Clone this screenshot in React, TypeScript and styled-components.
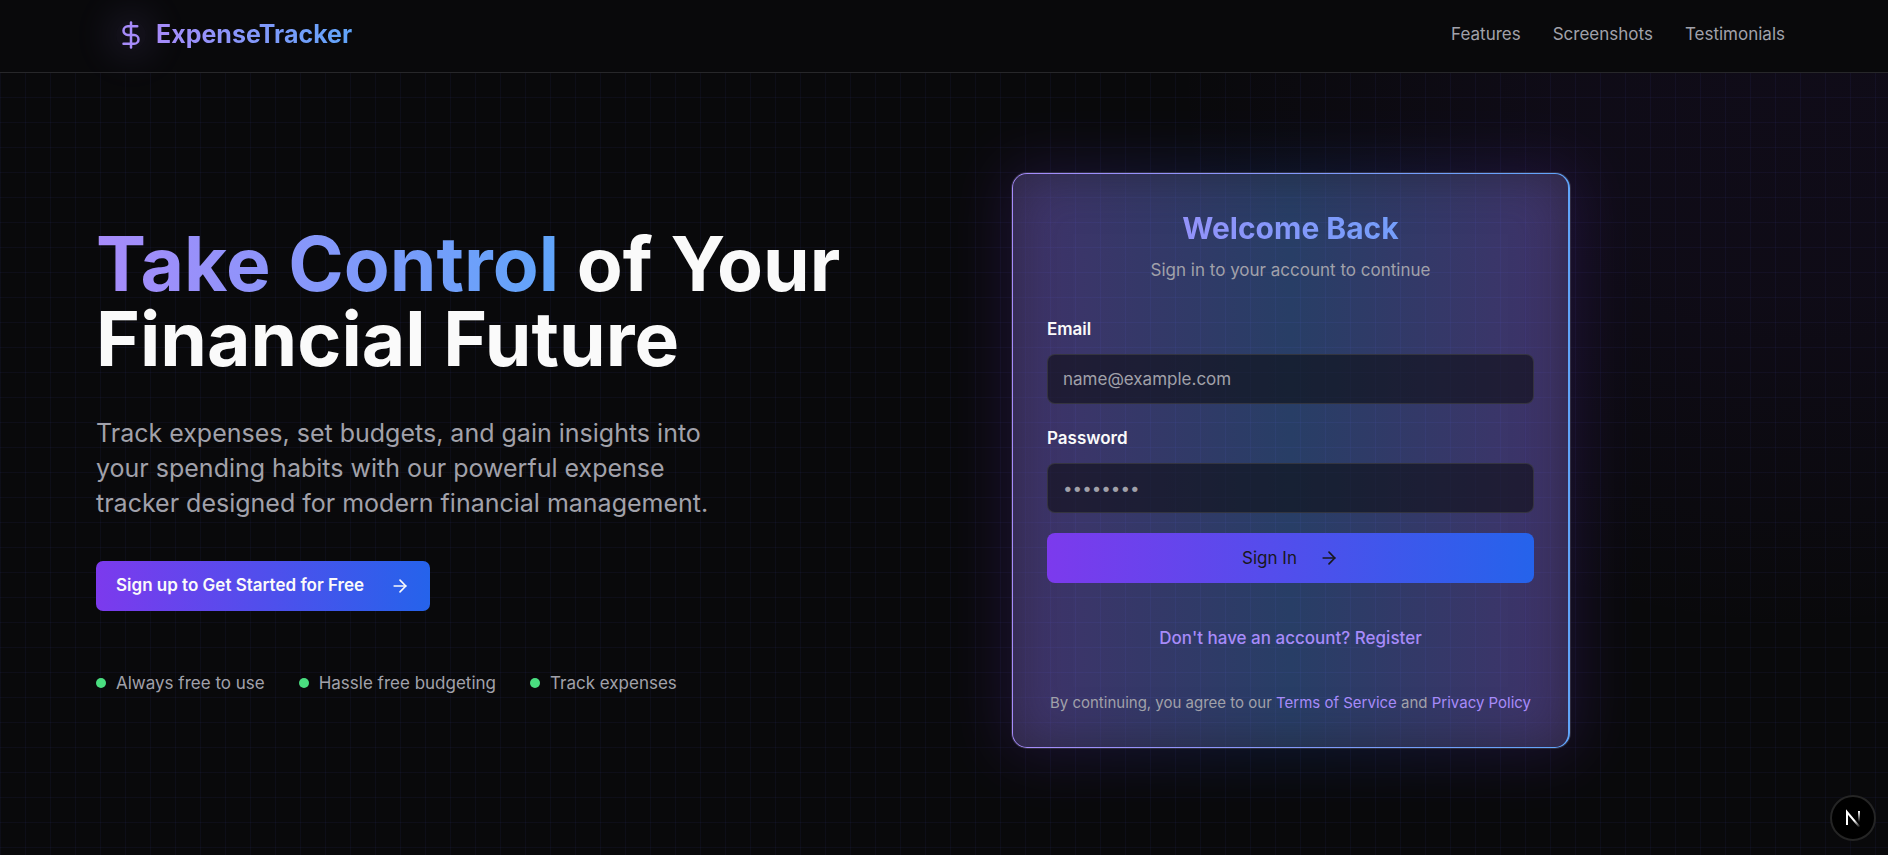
import React from "react";
import styled, { createGlobalStyle, css } from "styled-components";
import { ArrowRight, DollarSign } from "lucide-react";

const Global = createGlobalStyle`
  * { box-sizing: border-box; }
  html { background: #09090b; }
  body {
    margin: 0;
    background: #09090b;
    color: #fafafa;
    font-family: Inter, "Liberation Sans", sans-serif;
    font-size: 17px;
    line-height: 25px;
  }
  a { text-decoration: none; color: inherit; }
  h1, h2, p, ul { margin: 0; padding: 0; }
  input, button { font: inherit; }
`;

const brandText = css`
  background: linear-gradient(to right, #a78bfa, #60a5fa);
  background-clip: text;
  -webkit-background-clip: text;
  color: transparent;
`;

const brandFill = css`
  background: linear-gradient(to right, #7c3aed, #2563eb);
`;

const Page = styled.div`
  display: flex;
  flex-direction: column;
  min-height: 100vh;
`;

const Header = styled.header`
  display: flex;
  align-items: center;
  justify-content: space-between;
  height: 73px;
  padding: 0 103px 3px 119px;
  border-bottom: 1px solid #27272a;
`;

const Brand = styled.a`
  display: flex;
  align-items: center;
  gap: 10px;
`;

const BrandMark = styled.span`
  display: flex;
  margin-left: -3px;
  color: #a78bfa;
  border-radius: 50%;
  box-shadow: 0 0 38px 8px rgba(167, 139, 250, 0.12);
  background: rgba(167, 139, 250, 0.06);
`;

const BrandName = styled.span`
  ${brandText}
  font-size: 25px;
  line-height: 35px;
  font-weight: 700;
`;

const Nav = styled.nav`
  display: flex;
  gap: 32px;
  color: #a1a1aa;
`;

const Hero = styled.main`
  flex: 1;
  display: grid;
  grid-template-columns: 1fr 1fr;
  gap: 60px;
  align-items: center;
  padding: 65px 20px 72px 96px;
  background:
    linear-gradient(to right, rgba(99, 102, 241, 0.06) 1px, transparent 1px) 0 -1px / 25px 25px,
    linear-gradient(to bottom, rgba(99, 102, 241, 0.06) 1px, transparent 1px) 0 -1px / 25px 25px,
    radial-gradient(ellipse 620px 560px at 95% 0, rgba(124, 58, 237, 0.06), rgba(124, 58, 237, 0.05) 40%, transparent);
`;

const Pitch = styled.section`
  display: flex;
  flex-direction: column;
  align-items: flex-start;
`;

const Headline = styled.h1`
  font-size: 75px;
  line-height: 75px;
  font-weight: 700;
`;

const Accent = styled.span`
  ${brandText}
`;

const Lead = styled.p`
  max-width: 640px;
  margin-top: 40px;
  color: #a1a1aa;
  font-size: 25px;
  line-height: 35px;
`;

const CallToAction = styled.a`
  ${brandFill}
  display: flex;
  align-items: center;
  gap: 26px;
  height: 50px;
  margin-top: 40px;
  padding: 0 20px;
  border-radius: 7px;
  font-weight: 600;
`;

const Perks = styled.ul`
  display: flex;
  gap: 34px;
  margin-top: 60px;
  list-style: none;
  color: #a1a1aa;
`;

const Perk = styled.li`
  display: flex;
  align-items: center;
  gap: 10px;
  &::before {
    content: "";
    width: 10px;
    height: 10px;
    border-radius: 50%;
    background: #4ade80;
  }
`;

const CardGlow = styled.div`
  position: relative;
  z-index: 0;
  width: 100%;
  max-width: 558px;
  &::before {
    content: "";
    position: absolute;
    inset: -8px;
    z-index: -1;
    border-radius: 24px;
    background: linear-gradient(to right, #7c3aed, #2563eb 50%, #7c3aed);
    opacity: 0.17;
    filter: blur(30px);
  }
`;

const Card = styled.section`
  padding: 34px;
  border-radius: 15px;
  background:
    linear-gradient(to right, rgba(99, 102, 241, 0.07) 1px, transparent 1px) 0 0 / 25px 25px fixed padding-box,
    linear-gradient(to bottom, rgba(99, 102, 241, 0.07) 1px, transparent 1px) 0 22px / 25px 25px fixed padding-box,
    linear-gradient(to right, #40336a, #283e66 50%, #40336a) padding-box,
    linear-gradient(to right, #a78bfa, #60a5fa) border-box;
  border: 1px solid transparent;
  border-right-width: 2px;
  box-shadow: 0 0 0 1px rgba(82, 82, 100, 0.45), inset 0 0 50px rgba(32, 32, 38, 0.6);
  text-align: center;
`;

const CardTitle = styled.h2`
  ${brandText}
  font-size: 30px;
  line-height: 40px;
  font-weight: 700;
`;

const Subtitle = styled.p`
  margin-top: 10px;
  color: #a1a1aa;
`;

const Form = styled.form`
  display: flex;
  flex-direction: column;
  gap: 20px;
  margin-top: 32px;
  text-align: left;
`;

const Field = styled.div`
  display: flex;
  flex-direction: column;
  gap: 10px;
`;

const Label = styled.label`
  line-height: 29px;
  font-weight: 600;
`;

const Input = styled.input`
  width: 100%;
  height: 50px;
  padding: 0 15px;
  border: 1px solid rgba(63, 63, 70, 0.7);
  border-radius: 8px;
  background: rgba(9, 9, 11, 0.55);
  color: #fafafa;
  &::placeholder { color: #a1a1aa; opacity: 1; }
`;

const Submit = styled.button`
  ${brandFill}
  display: flex;
  align-items: center;
  justify-content: center;
  gap: 22px;
  height: 50px;
  border: 0;
  border-radius: 8px;
  color: #18181b;
`;

const Register = styled.a`
  display: block;
  margin-top: 43px;
  color: #a78bfa;
  font-weight: 500;
`;

const Terms = styled.p`
  margin-top: 42px;
  color: #a1a1aa;
  font-size: 15px;
  line-height: 20px;
  a { color: #a78bfa; }
`;

const DevBadge = styled.button`
  position: fixed;
  right: 12px;
  bottom: 14px;
  display: flex;
  align-items: center;
  justify-content: center;
  width: 46px;
  height: 46px;
  padding: 0;
  border: 2px solid #252525;
  border-radius: 50%;
  background: #000;
`;

const perks = ["Always free to use", "Hassle free budgeting", "Track expenses"];

export default function App() {
  return (
    <Page>
      <Global />
      <Header>
        <Brand href="#">
          <BrandMark><DollarSign size={30} strokeWidth={2} /></BrandMark>
          <BrandName>ExpenseTracker</BrandName>
        </Brand>
        <Nav>
          <a href="#features">Features</a>
          <a href="#screenshots">Screenshots</a>
          <a href="#testimonials">Testimonials</a>
        </Nav>
      </Header>
      <Hero>
        <Pitch>
          <Headline><Accent>Take Control</Accent> of Your Financial Future</Headline>
          <Lead>
            Track expenses, set budgets, and gain insights into your spending habits with our
            powerful expense tracker designed for modern financial management.
          </Lead>
          <CallToAction href="#signup">
            Sign up to Get Started for Free
            <ArrowRight size={20} />
          </CallToAction>
          <Perks>
            {perks.map((perk) => <Perk key={perk}>{perk}</Perk>)}
          </Perks>
        </Pitch>
        <CardGlow>
          <Card>
            <CardTitle>Welcome Back</CardTitle>
            <Subtitle>Sign in to your account to continue</Subtitle>
            <Form onSubmit={(e) => e.preventDefault()}>
              <Field>
                <Label htmlFor="email">Email</Label>
                <Input id="email" type="email" placeholder="name@example.com" />
              </Field>
              <Field>
                <Label htmlFor="password">Password</Label>
                <Input id="password" type="password" placeholder="••••••••" />
              </Field>
              <Submit type="submit">Sign In <ArrowRight size={20} /></Submit>
            </Form>
            <Register href="#register">Don't have an account? Register</Register>
            <Terms>
              By continuing, you agree to our <a href="#terms">Terms of Service</a> and{" "}
              <a href="#privacy">Privacy Policy</a>
            </Terms>
          </Card>
        </CardGlow>
      </Hero>
      <DevBadge type="button" aria-label="Open developer tools">
        <svg width="18" height="18" viewBox="0 0 18 18" fill="none">
          <defs>
            <linearGradient id="diag" x1="11" y1="11" x2="16" y2="18" gradientUnits="userSpaceOnUse">
              <stop stopColor="#fff" /><stop offset="1" stopColor="#fff" stopOpacity="0" />
            </linearGradient>
            <linearGradient id="stem" x1="15" y1="2" x2="15" y2="13" gradientUnits="userSpaceOnUse">
              <stop stopColor="#fff" /><stop offset="1" stopColor="#fff" stopOpacity="0" />
            </linearGradient>
          </defs>
          <path d="M3 16V3L15.500 18" stroke="url(#diag)" strokeWidth="2" />
          <rect x="14" y="2" width="2" height="11" fill="url(#stem)" />
        </svg>
      </DevBadge>
    </Page>
  );
}
